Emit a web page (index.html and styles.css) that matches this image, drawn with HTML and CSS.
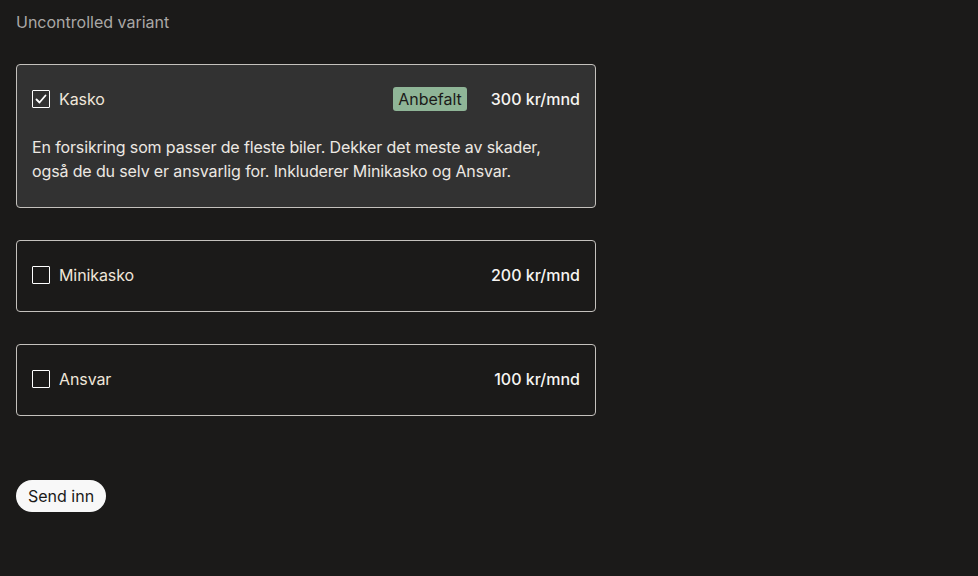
FILE: index.html
```html
<!DOCTYPE html>
<html lang="no">
<head>
<meta charset="utf-8">
<title>Uncontrolled variant</title>
<link rel="stylesheet" href="styles.css">
</head>
<body>
<main class="page">
  <h2 class="title">Uncontrolled variant</h2>
  <form class="form">
    <div class="options">
      <label class="card card--checked">
        <div class="row">
          <span class="box box--checked">
            <svg viewBox="0 0 16 16" width="16" height="16"><path d="M3.5 8.5l3 3 6-7" fill="none" stroke="#fff" stroke-width="1.8" stroke-linecap="round" stroke-linejoin="round"/></svg>
          </span>
          <span class="label">Kasko</span>
          <span class="badge">Anbefalt</span>
          <span class="price">300 kr/mnd</span>
        </div>
        <p class="desc">En forsikring som passer de fleste biler. Dekker det meste av skader, også de du selv er ansvarlig for. Inkluderer Minikasko og Ansvar.</p>
      </label>
      <label class="card">
        <div class="row">
          <span class="box"></span>
          <span class="label">Minikasko</span>
          <span class="price">200 kr/mnd</span>
        </div>
      </label>
      <label class="card">
        <div class="row">
          <span class="box"></span>
          <span class="label">Ansvar</span>
          <span class="price">100 kr/mnd</span>
        </div>
      </label>
    </div>
    <button type="button" class="submit">Send inn</button>
  </form>
</main>
</body>
</html>
```

FILE: styles.css
```css
* { box-sizing: border-box; }
html, body {
  margin: 0;
  padding: 0;
  background: #1b1a19;
}
body {
  font-family: Inter, "Noto Sans", "Liberation Sans", sans-serif;
  font-size: 16px;
  line-height: 24px;
  color: #ece6de;
}
.page {
  padding: 10px 16px 16px;
  width: 612px;
}
.title {
  margin: 0 0 30px;
  font-size: 16px;
  font-weight: 400;
  line-height: 24px;
  color: #aaa8a6;
}
.form {
  display: flex;
  flex-direction: column;
  align-items: flex-start;
  gap: 64px;
}
.options {
  display: flex;
  flex-direction: column;
  gap: 32px;
  width: 580px;
}
.card {
  display: flex;
  flex-direction: column;
  gap: 24px;
  padding: 22px 15px 24px;
  border: 1px solid #c4c1bd;
  border-radius: 4px;
  background: #1b1a19;
}
.card--checked {
  background: #323232;
}
.row {
  display: flex;
  align-items: center;
  height: 24px;
}
.box {
  width: 18px;
  height: 18px;
  border: 1.5px solid #ffffff;
  border-radius: 1px;
  display: flex;
  align-items: center;
  justify-content: center;
  flex: none;
}
.label {
  margin-left: 9px;
  flex: 1;
  color: #efe6da;
  letter-spacing: -0.1px;
}
.badge {
  background: #8fb597;
  color: #1b1a19;
  border-radius: 3px;
  padding: 0 5px;
  height: 24px;
  line-height: 24px;
  margin-right: 24px;
}
.price {
  font-weight: 500;
  color: #f6f4f1;
}
.desc {
  margin: 0;
  padding-right: 20px;
  color: #ece8e2;
  letter-spacing: -0.13px;
}
.submit {
  font-family: inherit;
  font-size: 16px;
  line-height: 24px;
  height: 32px;
  padding: 4px 12px;
  border: none;
  border-radius: 16px;
  background: #f8f8f8;
  color: #1b1a19;
}
```
